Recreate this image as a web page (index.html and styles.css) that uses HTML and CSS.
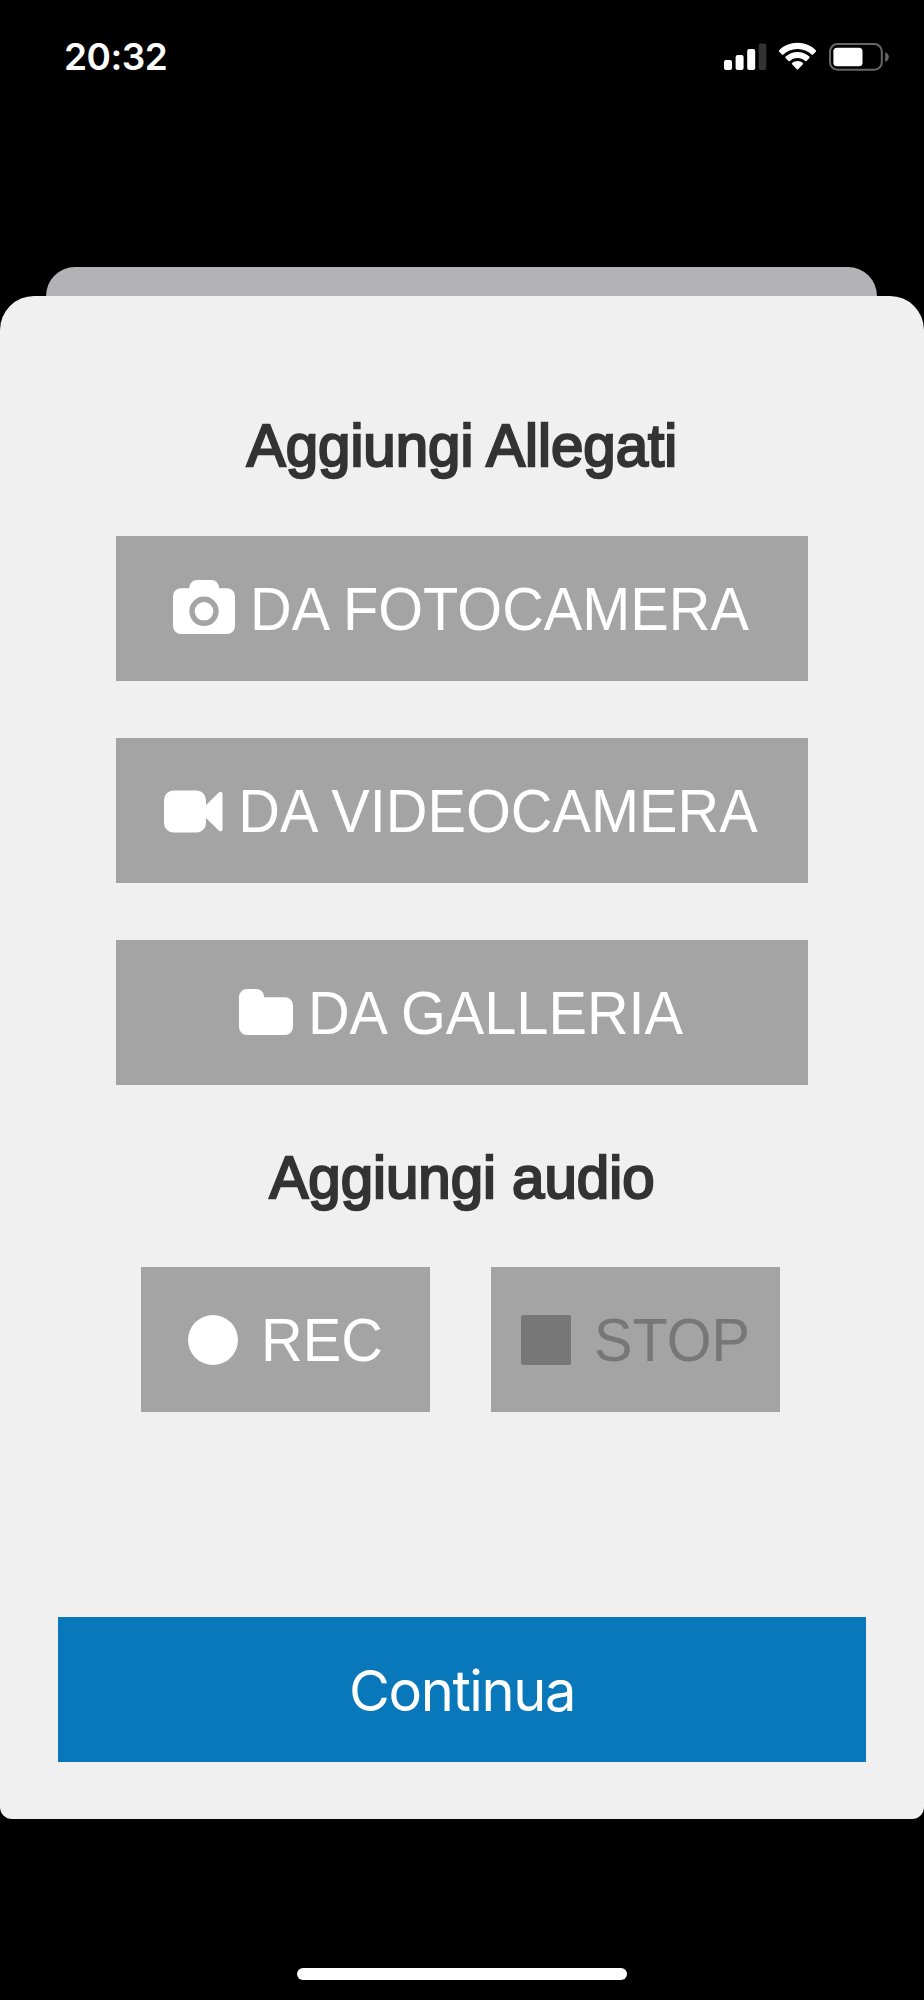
FILE: index.html
```html
<!DOCTYPE html>
<html lang="it">
<head>
<meta charset="utf-8">
<title>Aggiungi Allegati</title>
<link rel="stylesheet" href="styles.css">
</head>
<body>
<div class="screen">
  <header class="status">
    <span class="clock">20:32</span>
    <svg class="status-icons" width="166" height="30" viewBox="724 42 166 30">
      <g fill="#fff">
        <rect x="724" y="60" width="8" height="10" rx="2"/>
        <rect x="735.6" y="55" width="8" height="15" rx="2"/>
        <rect x="747.2" y="49" width="8" height="21" rx="2"/>
        <rect x="758.7" y="43.5" width="7.6" height="26.5" rx="2" fill="#333"/>
        <path d="M797.5 42.8c7.2 0 13.7 2.8 18.300 7.500c.4.400.4 1 0 1.400l-2.800 2.900c-.4.400-.9.400-1.300 0c-3.700-3.500-8.700-5.600-14.200-5.600s-10.500 2.100-14.200 5.600c-.4.400-.9.400-1.300 0l-2.800-2.900c-.4-.4-.4-1 0-1.400c4.600-4.700 11.100-7.500 18.300-7.500z"/>
        <path d="M797.5 51.900c4.600 0 8.800 1.800 11.900 4.700c.4.400.4 1 0 1.400l-2.900 2.900c-.4.400-.9.400-1.300 0c-2-1.800-4.700-2.900-7.700-2.900s-5.700 1.100-7.700 2.900c-.4.400-.9.400-1.300 0l-2.900-2.900c-.4-.4-.4-1 0-1.400c3.100-2.900 7.300-4.700 11.900-4.700z"/>
        <path d="M797.5 61c2 0 3.900.7 5.300 1.900c.5.400.5 1 .1 1.400l-4.700 4.900c-.4.400-1 .4-1.400 0l-4.700-4.900c-.4-.4-.4-1 .1-1.400c1.400-1.200 3.300-1.900 5.300-1.900z"/>
        <rect x="833.4" y="47.700" width="29.100" height="18.600" rx="3.600"/>
        <path d="M885.2 52.200c2.200.8 3.700 2.700 3.700 4.900s-1.500 4.100-3.700 4.900z" fill="#666"/>
      </g>
      <rect x="830" y="44.100" width="51.800" height="25.600" rx="7.500" fill="none" stroke="#666" stroke-width="2"/>
    </svg>
  </header>

  <div class="sheet-behind"></div>
  <main class="sheet">
    <h2 class="title"><span class="label">Aggiungi Allegati</span></h2>
    <div class="sources">
      <button class="btn">
        <svg width="62" height="57" viewBox="0 0 62 57">
          <path fill="#fff" fill-rule="evenodd" d="M8 8.200h8.200C17 3 19.500 0 24 0h14.500c4.500 0 7 3 7.800 8.200H54a8 8 0 0 1 8 8V46a8 8 0 0 1-8 8H8a8 8 0 0 1-8-8V16.200a8 8 0 0 1 8-8zM31 16.600a14.700 14.700 0 1 0 0 29.400a14.700 14.700 0 1 0 0-29.400zM31 22a9.300 9.300 0 1 1 0 18.600a9.300 9.300 0 1 1 0-18.600z"/>
        </svg>
        <span class="label">DA FOTOCAMERA</span>
      </button>
      <button class="btn">
        <svg width="59" height="40" viewBox="0 0 59 40">
          <path fill="#fff" d="M9.500-.5h23a9.500 9.500 0 0 1 9.500 9.500v5L54.800 1.600c1.600-1.600 3.700-1 3.700 1.200v35.400c0 2.200-2.100 2.800-3.700 1.200L42 27v5a9.500 9.500 0 0 1-9.500 9.500h-23A9.500 9.500 0 0 1 0 32v-23A9.500 9.500 0 0 1 9.500-.5z"/>
        </svg>
        <span class="label">DA VIDEOCAMERA</span>
      </button>
      <button class="btn">
        <svg width="54" height="48" viewBox="0 0 54 48">
          <path fill="#fff" d="M8 0h9c4.800 0 8 3.300 8 8.200h21a8 8 0 0 1 8 8V38a8 8 0 0 1-8 8H8a8 8 0 0 1-8-8V8a8 8 0 0 1 8-8z"/>
        </svg>
        <span class="label">DA GALLERIA</span>
      </button>
    </div>
    <h2 class="title title-audio"><span class="label">Aggiungi audio</span></h2>
    <div class="recorder">
      <button class="btn"><i class="dot"></i><span class="label">REC</span></button>
      <button class="btn" disabled><i class="block"></i><span class="label">STOP</span></button>
    </div>
    <button class="btn continue"><span class="continue-label">Continua</span></button>
  </main>
  <div class="home-bar"></div>
</div>
</body>
</html>
```

FILE: styles.css
```css
* { box-sizing: border-box; }

body {
  margin: 0;
  background: #000;
  font-family: "Liberation Sans", Arial, sans-serif;
}

.screen {
  width: 924px;
  height: 2000px;
  display: flex;
  flex-direction: column;
  align-items: center;
  overflow: hidden;
  background: #000;
}

.status {
  width: 100%;
  height: 267px;
  padding: 34px 34px 0 64px;
  display: flex;
  justify-content: space-between;
  align-items: flex-start;
}

.clock {
  font: 600 37px/45px Inter, sans-serif;
  letter-spacing: -0.5px;
  color: #fff;
}

.status-icons {
  display: block;
  margin-top: 8px;
  overflow: visible;
}

.sheet-behind {
  width: 831px;
  height: 29px;
  margin-right: 1px;
  border-radius: 30px 30px 0 0;
  background: #b3b3b5;
}

.sheet {
  width: 100%;
  height: 1523px;
  padding: 117px 58px 0;
  display: flex;
  flex-direction: column;
  align-items: center;
  border-radius: 34px 34px 12px 12px;
  background: #f0f0f0;
}

.title {
  margin: 0;
  height: 66px;
  font-size: 58.2px;
  line-height: 66px;
  font-weight: 400;
  color: #333;
  -webkit-text-stroke: 2.3px #333;
}

.label {
  display: inline-block;
  white-space: nowrap;
  transform: translateY(0.5px) scaleY(1.045);
}

.title .label { transform: scaleY(1.015); }

.sources {
  width: 692px;
  margin-top: 57px;
  display: flex;
  flex-direction: column;
  gap: 57px;
}

.btn {
  height: 145px;
  padding: 0;
  border: 0;
  display: flex;
  align-items: center;
  justify-content: center;
  gap: 15px;
  background: #a4a4a4;
  color: #fff;
  font: 57.7px/66px "Liberation Sans", Arial, sans-serif;
}

.sources .btn { padding-right: 2px; }

.btn svg {
  display: block;
  overflow: visible;
}

.title-audio { margin-top: 60px; }

.recorder {
  margin-top: 56px;
  margin-right: 3px;
  display: flex;
  gap: 61px;
}

.recorder .btn {
  width: 289px;
  gap: 23px;
}

.btn:disabled { color: #777; }

.dot, .block {
  width: 50px;
  height: 50px;
  background: currentColor;
}

.dot { border-radius: 50%; }
.block { border-radius: 2px; }

.continue {
  width: 808px;
  margin-top: 205px;
  background: #0878ba;
  font: 400 56px/68px Inter, sans-serif;
}

.continue-label {
  padding-top: 2px;
  letter-spacing: -1.4px;
}

.home-bar {
  width: 330px;
  height: 12px;
  margin-top: 149px;
  border-radius: 6px;
  background: #fff;
}
```
